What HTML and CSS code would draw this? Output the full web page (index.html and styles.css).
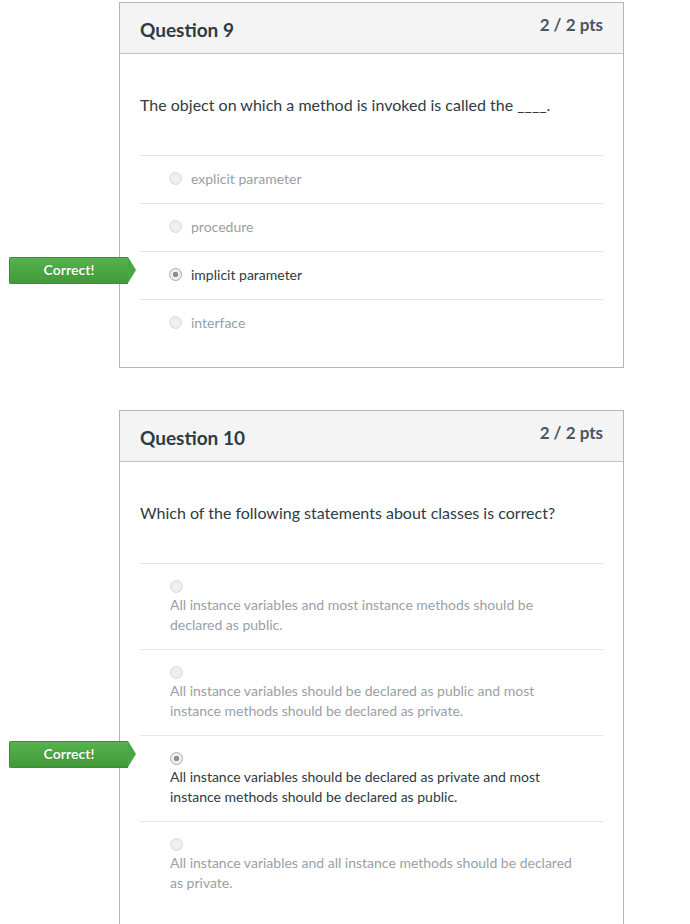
FILE: index.html
```html
<!DOCTYPE html>
<html>
<head>
<meta charset="utf-8">
<link rel="stylesheet" href="styles.css">
</head>
<body>
<div class="page">
  <div class="card">
    <div class="card-head">
      <h2 class="q-title">Question 9</h2>
      <div class="q-pts">2 / 2 pts</div>
    </div>
    <div class="card-body">
      <p class="q-text">The object on which a method is invoked is called the ____.</p>
      <div class="answers">
        <div class="answer inline"><span class="radio"></span><span class="label">explicit parameter</span></div>
        <div class="answer inline"><span class="radio"></span><span class="label">procedure</span></div>
        <div class="answer inline chosen"><span class="badge">Correct!</span><span class="radio on"></span><span class="label">implicit parameter</span></div>
        <div class="answer inline"><span class="radio"></span><span class="label">interface</span></div>
      </div>
    </div>
  </div>

  <div class="card">
    <div class="card-head">
      <h2 class="q-title">Question 10</h2>
      <div class="q-pts">2 / 2 pts</div>
    </div>
    <div class="card-body">
      <p class="q-text">Which of the following statements about classes is correct?</p>
      <div class="answers">
        <div class="answer stacked"><div class="radio-row"><span class="radio"></span></div><div class="label">All instance variables and most instance methods should be declared as public.</div></div>
        <div class="answer stacked"><div class="radio-row"><span class="radio"></span></div><div class="label">All instance variables should be declared as public and most instance methods should be declared as private.</div></div>
        <div class="answer stacked chosen"><span class="badge">Correct!</span><div class="radio-row"><span class="radio on"></span></div><div class="label">All instance variables should be declared as private and most instance methods should be declared as public.</div></div>
        <div class="answer stacked"><div class="radio-row"><span class="radio"></span></div><div class="label">All instance variables and all instance methods should be declared as private.</div></div>
      </div>
    </div>
  </div>
</div>
</body>
</html>
```

FILE: styles.css
```css
html, body {
  margin: 0;
  padding: 0;
  background: #ffffff;
}
body {
  font-family: Lato, "Open Sans", Arial, sans-serif;
  color: #2d3b45;
}
.page {
  padding: 2px 0 0 119px;
  display: flex;
  flex-direction: column;
  gap: 42px;
}
.card {
  width: 503px;
  border: 1px solid #b5b5b5;
  background: #fff;
}
.card-head {
  height: 50px;
  background: #f4f4f4;
  border-bottom: 1px solid #c4c4c4;
  display: flex;
  justify-content: space-between;
  align-items: flex-start;
  padding: 0 20px;
}
.q-title {
  margin: 0;
  font-size: 19px;
  font-weight: 700;
  line-height: 20px;
  padding-top: 17px;
  color: #2d3b45;
}
.q-pts {
  font-size: 17px;
  font-weight: 700;
  line-height: 20px;
  padding-top: 12px;
  color: #4a5560;
}
.card-body {
  padding: 41px 20px 20px;
}
.q-text {
  margin: 0 0 40px;
  font-size: 16px;
  line-height: 20px;
  color: #2d3b45;
}
.answer {
  position: relative;
  border-top: 1px solid #e6e6e6;
  color: #999fa5;
  font-size: 14px;
}
.answer.inline {
  box-sizing: border-box;
  height: 48px;
  display: flex;
  align-items: center;
  padding-left: 29px;
  padding-bottom: 2px;
  gap: 9px;
}
.answer.stacked {
  padding: 13px 30px 14px 30px;
  line-height: 20px;
}
.radio-row {
  height: 18px;
  display: flex;
  align-items: center;
}
.radio {
  width: 11px;
  height: 11px;
  border-radius: 50%;
  border: 1px solid #dadada;
  background: radial-gradient(circle, #f2f2f2 0%, #e9e9e9 100%);
  flex: none;
  box-sizing: content-box;
}
.radio.on {
  border-color: #a9a9a9;
  background: radial-gradient(circle, #8e8e8e 0 2.5px, #eeeeee 3px 100%);
}
.chosen {
  color: #2d3b45;
}
.label {
  line-height: 20px;
}
.badge {
  position: absolute;
  left: -131px;
  top: 5px;
  width: 119px;
  height: 27px;
  box-sizing: border-box;
  background: linear-gradient(#56b24f, #3f9a37);
  border: 1px solid #3e8c36;
  border-right: none;
  border-radius: 2px 0 0 2px;
  color: #fff;
  font-size: 14px;
  font-weight: 700;
  line-height: 23px;
  text-align: center;
  text-shadow: 0 0 1px rgba(0, 0, 0, 0.35);
}
.badge::after {
  content: "";
  position: absolute;
  right: -8px;
  top: -1px;
  width: 0;
  height: 0;
  border-top: 13.5px solid transparent;
  border-bottom: 13.5px solid transparent;
  border-left: 8px solid #4aa642;
}
```
